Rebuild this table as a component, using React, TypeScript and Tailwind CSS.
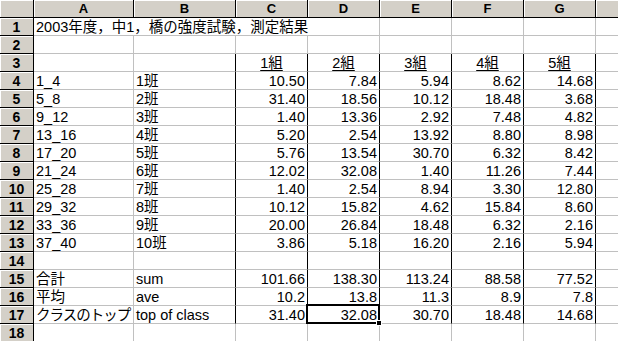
const columns = ["A", "B", "C", "D", "E", "F", "G", ""];

const groups = ["1組", "2組", "3組", "4組", "5組"];

const classRows: [string, string, string[]][] = [
  ["1_4", "1班", ["10.50", "7.84", "5.94", "8.62", "14.68"]],
  ["5_8", "2班", ["31.40", "18.56", "10.12", "18.48", "3.68"]],
  ["9_12", "3班", ["1.40", "13.36", "2.92", "7.48", "4.82"]],
  ["13_16", "4班", ["5.20", "2.54", "13.92", "8.80", "8.98"]],
  ["17_20", "5班", ["5.76", "13.54", "30.70", "6.32", "8.42"]],
  ["21_24", "6班", ["12.02", "32.08", "1.40", "11.26", "7.44"]],
  ["25_28", "7班", ["1.40", "2.54", "8.94", "3.30", "12.80"]],
  ["29_32", "8班", ["10.12", "15.82", "4.62", "15.84", "8.60"]],
  ["33_36", "9班", ["20.00", "26.84", "18.48", "6.32", "2.16"]],
  ["37_40", "10班", ["3.86", "5.18", "16.20", "2.16", "5.94"]],
];

const summaryRows: [string, string, string[]][] = [
  ["合計", "sum", ["101.66", "138.30", "113.24", "88.58", "77.52"]],
  ["平均", "ave", ["10.2", "13.8", "11.3", "8.9", "7.8"]],
  ["クラスのトップ", "top of class", ["31.40", "32.08", "30.70", "18.48", "14.68"]],
];

function RowHead({ n }: { n: number }) {
  return (
    <div className="flex items-center justify-center border-r border-b border-black bg-[#d4d0c8] text-[14px] font-bold leading-none text-black shadow-[inset_1px_1px_0_#ffffff]">
      {n}
    </div>
  );
}

function Cell({
  children,
  align = "left",
  dark = false,
  className = "",
}: {
  children?: React.ReactNode;
  align?: "left" | "right" | "center";
  dark?: boolean;
  className?: string;
}) {
  const justify =
    align === "right" ? "justify-end" : align === "center" ? "justify-center" : "justify-start";
  return (
    <div
      className={`relative flex items-end ${justify} overflow-hidden whitespace-nowrap border-b border-r border-[#c0c0c0] bg-white px-[2px] text-[14.5px] leading-[15px] text-black ${dark ? "border-r-black" : ""} ${className}`}
    >
      {children}
    </div>
  );
}

// one sheet row: row header + cells A..H, borders dark on B..G for rows 3-17
function DataRow({
  n,
  a,
  b,
  values,
  selectedCol,
  aClass = "",
}: {
  n: number;
  a?: string;
  b?: string;
  values?: string[];
  selectedCol?: number;
  aClass?: string;
}) {
  const framed = n >= 3 && n <= 17;
  return (
    <>
      <RowHead n={n} />
      <Cell className={aClass}>{a}</Cell>
      <Cell dark={framed}>{b}</Cell>
      {[0, 1, 2, 3, 4].map((i) => (
        <Cell key={i} align="right" dark={framed} className={selectedCol === i ? "overflow-visible" : ""}>
          {values?.[i]}
          {selectedCol === i && (
            <div className="pointer-events-none absolute -left-[2px] -top-[2px] z-10 h-[20px] w-[74px] border-2 border-black">
              <div className="absolute -bottom-[4px] -right-[4px] h-[6px] w-[6px] border border-white bg-black" />
            </div>
          )}
        </Cell>
      ))}
      <Cell />
    </>
  );
}

export default function App() {
  return (
    <div className="h-[341px] w-full overflow-hidden bg-white font-['Liberation_Sans','Noto_Sans_CJK_JP',sans-serif]">
      <div className="grid w-[668px] grid-cols-[34px_100px_102px_72px_72px_72px_72px_72px_72px] auto-rows-[18px]">
        {/* column headers */}
        <div className="border-r border-b border-black bg-[#d4d0c8] shadow-[inset_1px_1px_0_#ffffff]" />
        {columns.map((c, i) => (
          <div
            key={i}
            className="flex items-center justify-center border-r border-b border-black bg-[#d4d0c8] text-[13px] font-bold leading-none text-black shadow-[inset_1px_1px_0_#ffffff]"
          >
            {c}
          </div>
        ))}

        {/* row 1: title spills over A..D */}
        <RowHead n={1} />
        <Cell className="col-span-4">2003年度，中1，橋の強度試験，測定結果</Cell>
        <Cell />
        <Cell />
        <Cell />
        <Cell />

        <DataRow n={2} />

        {/* row 3: group headings */}
        <RowHead n={3} />
        <Cell />
        <Cell dark />
        {groups.map((g) => (
          <Cell key={g} align="center" dark>
            <span className="underline underline-offset-2">{g}</span>
          </Cell>
        ))}
        <Cell />

        {classRows.map(([a, b, values], i) => (
          <DataRow key={a} n={i + 4} a={a} b={b} values={values} />
        ))}

        <DataRow n={14} />

        {summaryRows.map(([a, b, values], i) => (
          <DataRow
            key={b}
            n={i + 15}
            a={a}
            b={b}
            values={values}
            selectedCol={i === 2 ? 1 : undefined}
            aClass={i === 2 ? "tracking-[-1px]" : ""}
          />
        ))}

        <DataRow n={18} />
      </div>
    </div>
  );
}
